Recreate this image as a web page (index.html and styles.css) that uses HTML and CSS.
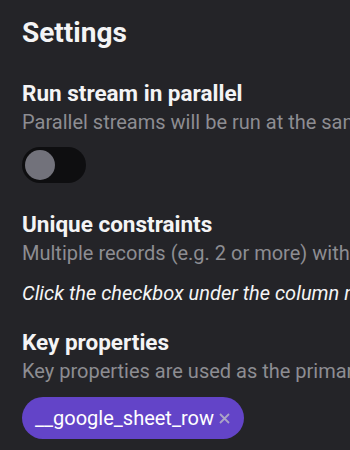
FILE: index.html
```html
<!DOCTYPE html>
<html lang="en">
<head>
    <meta charset="UTF-8">
    <meta name="viewport" content="width=device-width, initial-scale=1.0">
    <title>Settings</title>
    <link rel="stylesheet" href="styles.css">
</head>
<body>

    <h1>Settings</h1>

    <div class="section">
        <h2>Run stream in parallel</h2>
        <p class="desc">Parallel streams will be run at the same time instead of one after another.</p>
        <label class="toggle">
            <input type="checkbox">
            <span class="knob"></span>
        </label>
    </div>

    <div class="section">
        <h2>Unique constraints</h2>
        <p class="desc">Multiple records (e.g. 2 or more) with the same values for the key properties will be merged.</p>
        <p class="hint">Click the checkbox under the column name to add it as a unique constraint.</p>
    </div>

    <div class="section">
        <h2>Key properties</h2>
        <p class="desc">Key properties are used as the primary key for the destination table.</p>
        <div class="chips">
            <span class="chip">__google_sheet_row
                <svg class="chip-x" width="11" height="11" viewBox="0 0 11 11">
                    <path d="M1 1L10 10M10 1L1 10" stroke="currentColor" stroke-width="1.8" fill="none"/>
                </svg>
            </span>
        </div>
    </div>

</body>
</html>
```

FILE: styles.css
```css
html, body {
    overflow: hidden;
}

body {
    font-family: Roboto, "Liberation Sans", sans-serif;
    background-color: #242428;
    color: #f4f4f5;
    margin: 0;
    padding: 15px 22px 0;
    white-space: nowrap;
}

h1 {
    font-size: 28px;
    line-height: 36px;
    font-weight: 700;
    margin: 0 0 28px;
}

h2 {
    font-size: 22.5px;
    line-height: 28px;
    font-weight: 700;
    margin: 0;
}

.desc {
    font-size: 20px;
    line-height: 28px;
    color: #8d8d92;
    margin: 1px 0 0;
}

.hint {
    font-size: 20px;
    line-height: 28px;
    font-style: italic;
    margin: 12px 0 0;
}

.section {
    margin-bottom: 21px;
}

.toggle {
    display: block;
    position: relative;
    width: 64px;
    height: 36px;
    margin: 11px 0 27px;
    background-color: #0e0e10;
    border-radius: 18px;
    cursor: pointer;
}

.toggle input {
    display: none;
}

.knob {
    position: absolute;
    top: 3px;
    left: 3px;
    width: 30px;
    height: 30px;
    border-radius: 50%;
    background-color: #72727b;
}

.toggle input:checked + .knob {
    left: 31px;
    background-color: #6344c8;
}

.chips {
    margin-top: 12px;
    display: flex;
}

.chip {
    display: inline-flex;
    align-items: center;
    gap: 5px;
    height: 42px;
    padding: 0 14px 0 13px;
    background-color: #6344c8;
    color: #ffffff;
    font-size: 20px;
    border-radius: 21px;
}

.chip-x {
    color: #aaa4c6;
    margin-top: 1px;
}
```
